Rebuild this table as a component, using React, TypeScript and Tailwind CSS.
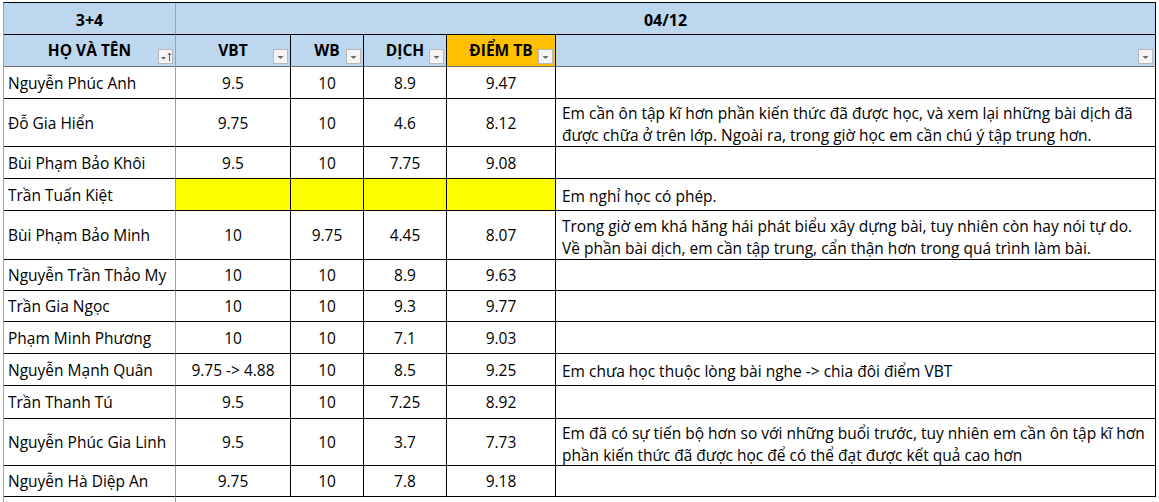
import React from "react";

type Row = {
  name: string;
  v: string[];
  c: string[];
  h: string;
  yellow?: boolean;
};

const rows: Row[] = [
  { name: "Nguyễn Phúc Anh", v: ["9.5", "10", "8.9", "9.47"], c: [], h: "h-[32px]" },
  {
    name: "Đỗ Gia Hiển",
    v: ["9.75", "10", "4.6", "8.12"],
    c: [
      "Em cần ôn tập kĩ hơn phần kiến thức đã được học, và xem lại những bài dịch đã",
      "được chữa ở trên lớp. Ngoài ra, trong giờ học em cần chú ý tập trung hơn.",
    ],
    h: "h-[48px]",
  },
  { name: "Bùi Phạm Bảo Khôi", v: ["9.5", "10", "7.75", "9.08"], c: [], h: "h-[32px]" },
  { name: "Trần Tuấn Kiệt", v: ["", "", "", ""], c: ["Em nghỉ học có phép."], h: "h-[32px]", yellow: true },
  {
    name: "Bùi Phạm Bảo Minh",
    v: ["10", "9.75", "4.45", "8.07"],
    c: [
      "Trong giờ em khá hăng hái phát biểu xây dựng bài, tuy nhiên còn hay nói tự do.",
      "Về phần bài dịch, em cần tập trung, cẩn thận hơn trong quá trình làm bài.",
    ],
    h: "h-[49px]",
  },
  { name: "Nguyễn Trần Thảo My", v: ["10", "10", "8.9", "9.63"], c: [], h: "h-[31px]" },
  { name: "Trần Gia Ngọc", v: ["10", "10", "9.3", "9.77"], c: [], h: "h-[31px]" },
  { name: "Phạm Minh Phương", v: ["10", "10", "7.1", "9.03"], c: [], h: "h-[32px]" },
  {
    name: "Nguyễn Mạnh Quân",
    v: ["9.75 -> 4.88", "10", "8.5", "9.25"],
    c: ["Em chưa học thuộc lòng bài nghe -> chia đôi điểm VBT"],
    h: "h-[32px]",
  },
  { name: "Trần Thanh Tú", v: ["9.5", "10", "7.25", "8.92"], c: [], h: "h-[33px]" },
  {
    name: "Nguyễn Phúc Gia Linh",
    v: ["9.5", "10", "3.7", "7.73"],
    c: [
      "Em đã có sự tiến bộ hơn so với những buổi trước, tuy nhiên em cần ôn tập kĩ hơn",
      "phần kiến thức đã được học để có thể đạt được kết quả cao hơn",
    ],
    h: "h-[47px]",
  },
  { name: "Nguyễn Hà Diệp An", v: ["9.75", "10", "7.8", "9.18"], c: [], h: "h-[31px]" },
];

const numW = ["w-[115px]", "w-[73px]", "w-[83px]", "w-[109px]"];

function FilterBtn({ sorted }: { sorted?: boolean }) {
  return (
    <span className="absolute right-[2px] bottom-[2px] w-[15px] h-[15px] border border-[#b8b8b8] bg-[#f4f4f4] flex items-center justify-center">
      {sorted ? (
        <svg width="13" height="13" viewBox="0 0 13 13">
          <polygon points="2,7 7,7 4.5,9.5" fill="#5a5a5a" />
          <line x1="10.5" y1="3" x2="10.5" y2="11" stroke="#5a5a5a" strokeWidth="1" />
          <polyline points="8.8,5 10.5,3 12.2,5" fill="none" stroke="#5a5a5a" strokeWidth="1" />
        </svg>
      ) : (
        <svg width="13" height="13" viewBox="0 0 13 13">
          <polygon points="3.5,6 9.5,6 6.5,9" fill="#6a6a6a" />
        </svg>
      )}
    </span>
  );
}

export default function App() {
  return (
    <div
      className="w-[1159px] h-[502px] overflow-hidden bg-white pt-[2px] pl-[3px] text-black"
      style={{ fontFamily: '"Open Sans", "Noto Sans", sans-serif' }}
    >
      <div className="w-[1153px] border-l border-l-[#a0a0a0] border-t border-t-black">
        {/* header row 1 */}
        <div className="flex h-[32px]">
          <div className="w-[172px] h-full border-r border-r-[#a0a0a0] border-b border-b-black bg-[#bdd7ee] flex items-center justify-center pt-[3px] font-bold text-[16px]">
            3+4
          </div>
          <div className="w-[980px] h-full border-r border-r-black border-b border-b-black bg-[#bdd7ee] flex items-center justify-center pt-[3px] font-bold text-[16px]">
            04/12
          </div>
        </div>
        {/* header row 2 */}
        <div className="flex h-[32px] font-bold text-[15.5px]">
          <div className="relative w-[172px] h-full border-r border-r-[#a0a0a0] border-b border-b-[#707070] bg-[#bdd7ee] flex items-center justify-center pt-[1px]">
            HỌ VÀ TÊN
            <FilterBtn sorted />
          </div>
          <div className="relative w-[115px] h-full border-r border-r-black border-b border-b-[#707070] bg-[#bdd7ee] flex items-center justify-center pt-[1px]">
            VBT
            <FilterBtn />
          </div>
          <div className="relative w-[73px] h-full border-r border-r-black border-b border-b-[#707070] bg-[#bdd7ee] flex items-center justify-center pt-[1px]">
            WB
            <FilterBtn />
          </div>
          <div className="relative w-[83px] h-full border-r border-r-black border-b border-b-[#707070] bg-[#bdd7ee] flex items-center justify-center pt-[1px]">
            DỊCH
            <FilterBtn />
          </div>
          <div className="relative w-[109px] h-full border-r border-r-black border-b border-b-[#707070] bg-[#ffc000] flex items-center justify-center pt-[1px]">
            ĐIỂM TB
            <FilterBtn />
          </div>
          <div className="relative w-[600px] h-full border-r border-r-black border-b border-b-[#707070] bg-[#bdd7ee]">
            <FilterBtn />
          </div>
        </div>
        {/* data rows */}
        {rows.map((r, i) => (
          <div key={i} className={`flex text-[15.5px] ${r.h}`}>
            <div className="w-[172px] h-full border-r border-r-[#a0a0a0] border-b border-b-black flex items-center pl-[4px] pt-[2px] whitespace-nowrap">
              {r.name}
            </div>
            {r.v.map((val, j) => (
              <div
                key={j}
                className={`${numW[j]} h-full border-r border-r-black border-b border-b-black flex items-center justify-center pt-[2px] whitespace-nowrap ${
                  r.yellow ? "bg-[#ffff00]" : "bg-white"
                }`}
              >
                {val}
              </div>
            ))}
            <div className="w-[600px] h-full border-r border-r-black border-b border-b-black flex flex-col justify-center pl-[6px] pt-[3px] leading-[22px]">
              {r.c.map((line, k) => (
                <div key={k} className="whitespace-nowrap">
                  {line}
                </div>
              ))}
            </div>
          </div>
        ))}
        <div className="flex h-[10px]">
          <div className="w-[172px] h-full border-r border-r-[#a0a0a0]" />
        </div>
      </div>
    </div>
  );
}
